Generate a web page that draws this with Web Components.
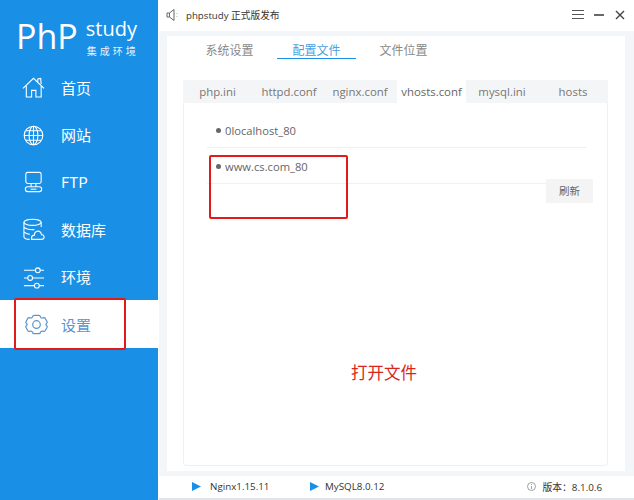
<!DOCTYPE html>
<html><head><meta charset="utf-8">
<style>
html,body{margin:0;padding:0;width:634px;height:500px;overflow:hidden;background:#fff}
body{font-family:"Open Sans","Noto Sans CJK SC",sans-serif}
</style></head><body>
<ps-app></ps-app>
<script>
const CJK='"Noto Sans CJK SC",sans-serif';
const ic={
home:'<path d="M1 13.5 L12 3 L23 13.5 M4.5 11 V22.5 H10 V15.5 H14.5 V22.5 H20 V11 M16.5 6.5 V3.5 L19.5 3 L20 9"/>',
globe:'<circle cx="12" cy="12.5" r="9.7"/><ellipse cx="12" cy="12.5" rx="4.6" ry="9.7"/><path d="M12 2.8 V22.2 M2.3 12.5 H21.7 M4 7.5 H20 M4 17.5 H20"/>',
ftp:'<rect x="4" y="2" width="16" height="11.5" rx="2"/><path d="M9.5 13.5 V17 M14.5 13.5 V17"/><rect x="3.5" y="17" width="17" height="5" rx="2.4"/><path d="M9 19.5 H15"/>',
db:'<ellipse cx="11" cy="5" rx="9" ry="3.2"/><path d="M2 5 V20 Q2 22.5 8 22.8 M20 5 V10 M2 10 Q5 13 13 12.6 M2 15 Q4 17 8 17.6"/><path d="M10 22.8 H21 Q23.5 22 23 19.6 Q22.4 17.6 20.4 18 Q19.4 13.6 15.6 14.4 Q12.6 15.4 13 18.4 Q10 18.6 10 21 Z"/>',
env:'<path d="M2 5 H14 M19 5 H23 M2 13 H6 M11 13 H23 M2 21 H13 M18 21 H23"/><circle cx="16.5" cy="5" r="2.5"/><circle cx="8.5" cy="13" r="2.5"/><circle cx="15.5" cy="21" r="2.5"/>',
gear:'<path d="M9.2 2.2 H14.8 Q16 2.2 16.4 3.6 Q17 5.4 18.6 5.2 L20.4 4.8 Q21.4 4.8 22 5.8 L24 9.4 Q24.4 10.4 23.6 11.2 Q22.6 12.2 22.6 12.6 Q22.6 13 23.6 14 Q24.4 14.8 24 15.8 L22 19.4 Q21.4 20.4 20.4 20.4 L18.6 20 Q17 19.8 16.4 21.6 Q16 23 14.8 23 H9.2 Q8 23 7.6 21.6 Q7 19.8 5.4 20 L3.6 20.4 Q2.6 20.4 2 19.4 L0 15.8 Q-.4 14.8 .4 14 Q1.4 13 1.4 12.6 Q1.4 12.2 .4 11.2 Q-.4 10.4 0 9.4 L2 5.8 Q2.6 4.8 3.6 4.8 L5.4 5.2 Q7 5.4 7.6 3.6 Q8 2.2 9.2 2.2 Z"/><circle cx="12" cy="12.6" r="4.3"/>'
};
class PsLogo extends HTMLElement{constructor(){super();this.attachShadow({mode:'open'}).innerHTML=`<style>
:host{display:flex;height:63.5px;color:#fff;box-sizing:border-box;padding:14px 0 0 16px;gap:8px;font-family:"Open Sans",sans-serif}
.p{font-size:34px;line-height:44px}
.c{display:flex;flex-direction:column;margin-top:2px}
.s{font-size:20px;line-height:26px}
.z{font:10px/14px ${CJK};letter-spacing:3px;margin:2px 0 0 1px;opacity:.9}
</style><div class="p">PhP</div><div class="c"><div class="s">study</div><div class="z">集成环境</div></div>`}}
customElements.define('ps-logo',PsLogo);
class PsNav extends HTMLElement{constructor(){super();this.attachShadow({mode:'open'}).innerHTML=`<style>
:host{display:flex;align-items:center;height:47.4px;padding-left:22px;gap:16px;color:#fff;font:15px ${CJK}}
:host([active]){background:#fff;color:#5b94cf}
svg{width:23px;height:24px;fill:none;stroke:currentColor;stroke-width:1.15;flex:none;overflow:visible}
:host([active]) svg{transform:translateX(3px) scale(.92);stroke-width:1.4}
</style><svg viewBox="0 0 24 24">${ic[this.getAttribute('icon')]}</svg><span><slot></slot></span>`}}
customElements.define('ps-nav',PsNav);
class PsSide extends HTMLElement{constructor(){super();this.attachShadow({mode:'open'}).innerHTML=`<style>
:host{display:block;width:158px;flex:none;background:#1a8fe6;height:500px}
</style><slot></slot>`}}
customElements.define('ps-side',PsSide);
class PsTitle extends HTMLElement{constructor(){super();this.attachShadow({mode:'open'}).innerHTML=`<style>
:host{display:flex;align-items:center;height:30px;padding-bottom:1px;background:#fff;padding-right:8px;padding-left:7px;color:#333;font:9.7px "Open Sans",${CJK}}
.sp{width:14px;height:14px;fill:none;stroke:#666;margin-right:6px}
.t{flex:1}
.b{display:block;margin-left:9px}
</style><svg class="sp" viewBox="0 0 14 14"><path d="M1 5 H3.5 L8 1.5 V12.5 L3.5 9 H1 Z M3.5 5 V9 M10.5 5 L11 5.5 M10.5 9 L11 8.5"/></svg><span class="t">phpstudy 正式版发布</span>
<svg class="b" width="12" height="12" viewBox="0 0 12 12" stroke="#555" fill="none"><path d="M0 1.5 H12 M0 5.5 H12 M0 9.5 H12"/></svg>
<svg class="b" width="12" height="12" viewBox="0 0 12 12" stroke="#444" stroke-width="1.6" fill="none"><path d="M1 6 H11"/></svg>
<svg class="b" width="12" height="12" viewBox="0 0 12 12" stroke="#444" stroke-width="1.4" fill="none"><path d="M2 2 L10 10 M10 2 L2 10"/></svg>`}}
customElements.define('ps-title',PsTitle);
class PsTabs extends HTMLElement{constructor(){super();this.attachShadow({mode:'open'}).innerHTML=`<style>
:host{display:flex;height:23px;padding-left:7px;font:12px ${CJK};color:#888}
div{width:79px;text-align:center;line-height:16px;padding-top:6px;height:16px;margin-right:8px}
.a{color:#4a9fe0;border-bottom:1px solid #1a8fe6}
</style><div>系统设置</div><div class="a">配置文件</div><div>文件位置</div>`}}
customElements.define('ps-tabs',PsTabs);
class PsFiles extends HTMLElement{constructor(){super();const w=[[69,'php.ini'],[74,'httpd.conf'],[68,'nginx.conf'],[69,'vhosts.conf',1],[72,'mysql.ini'],[70,'hosts']];this.attachShadow({mode:'open'}).innerHTML=`<style>
:host{display:flex;height:23px;background:#f4f5f6;font:11.4px "Open Sans",sans-serif;color:#777;width:425px}
div{text-align:center;line-height:23px;white-space:nowrap}
.a{background:#fff;color:#666;margin-left:3px}
</style>${w.map(x=>`<div class="${x[2]?'a':''}" style="width:${x[0]}px">${x[1]}</div>`).join('')}`}}
customElements.define('ps-files',PsFiles);
class PsSite extends HTMLElement{constructor(){super();this.attachShadow({mode:'open'}).innerHTML=`<style>
:host{display:flex;align-items:center;gap:4px;height:34px;padding:1px 0 0 9px;border-bottom:1px solid #f0f1f2;font:11.2px "Open Sans",sans-serif;color:#666}
i{width:5px;height:5px;border-radius:50%;background:#666}
</style><i></i><span><slot></slot></span>`}}
customElements.define('ps-site',PsSite);
class PsBar extends HTMLElement{constructor(){super();this.attachShadow({mode:'open'}).innerHTML=`<style>
:host{display:flex;align-items:center;height:21px;padding-bottom:1px;background:#fff;padding-right:32px;padding-left:33px;font:9.8px "Open Sans",${CJK};color:#333}
svg{flex:none}
.n{margin-left:9px;width:100px}
.m{margin-left:6px;flex:1}
.i{margin-right:6px}
</style><svg width="9" height="9" viewBox="0 0 9 9"><path d="M0 0 L9 4.5 L0 9Z" fill="#1a8fe6"/></svg><span class="n">Nginx1.15.11</span>
<svg width="9" height="9" viewBox="0 0 9 9"><path d="M0 0 L9 4.5 L0 9Z" fill="#1a8fe6"/></svg><span class="m">MySQL8.0.12</span>
<svg class="i" width="9" height="9" viewBox="0 0 9 9" fill="none" stroke="#888" stroke-width=".8"><circle cx="4.5" cy="4.5" r="4"/><path d="M4.5 4 V7 M4.5 2 V3"/></svg><span>版本：8.1.0.6</span>`}}
customElements.define('ps-bar',PsBar);
class PsCard extends HTMLElement{constructor(){super();this.attachShadow({mode:'open'}).innerHTML=`<style>
:host{display:block;background:#fff;height:435px;margin:5px 9px 5px 8px;padding:0 16px;box-sizing:border-box}
.gap{height:21px}
.box{height:363px;border:1px solid #f0f1f3;border-top:0;border-radius:0 0 4px 4px;width:425px;box-sizing:border-box;padding:9px 20px 0 23px;position:relative}
.btn{position:absolute;left:362px;top:76px;width:47px;height:24px;background:#f4f4f4;color:#666;font:10.5px/24px ${CJK};text-align:center}
.open{font:16.5px/24px ${CJK};color:#d8261c;position:absolute;left:167px;top:257px}
</style><ps-tabs></ps-tabs><div class="gap"></div><ps-files></ps-files>
<div class="box"><ps-site>0localhost_80</ps-site><ps-site>www.cs.com_80</ps-site><div class="btn">刷新</div><div class="open">打开文件</div></div>`}}
customElements.define('ps-card',PsCard);
class PsApp extends HTMLElement{constructor(){super();this.attachShadow({mode:'open'}).innerHTML=`<style>
:host{display:flex;width:634px;height:500px;background:#fff;position:relative;overflow:hidden}
.main{flex:1;background:#f3f6f9;height:498px;margin-left:1px;display:flex;flex-direction:column;border-bottom:2px solid #e2e5e8}
.red{position:absolute;border:2px solid #e01b1b;border-radius:2px;box-sizing:border-box}
</style><ps-side><ps-logo></ps-logo><ps-nav icon="home">首页</ps-nav><ps-nav icon="globe">网站</ps-nav><ps-nav icon="ftp">FTP</ps-nav><ps-nav icon="db">数据库</ps-nav><ps-nav icon="env">环境</ps-nav><ps-nav icon="gear" active>设置</ps-nav></ps-side>
<div class="main"><ps-title></ps-title><ps-card></ps-card><ps-bar></ps-bar></div>
<div class="red" style="left:14px;top:298px;width:112px;height:52px"></div>
<div class="red" style="left:209px;top:155px;width:139px;height:64px"></div>`}}
customElements.define('ps-app',PsApp);
</script></body></html>
